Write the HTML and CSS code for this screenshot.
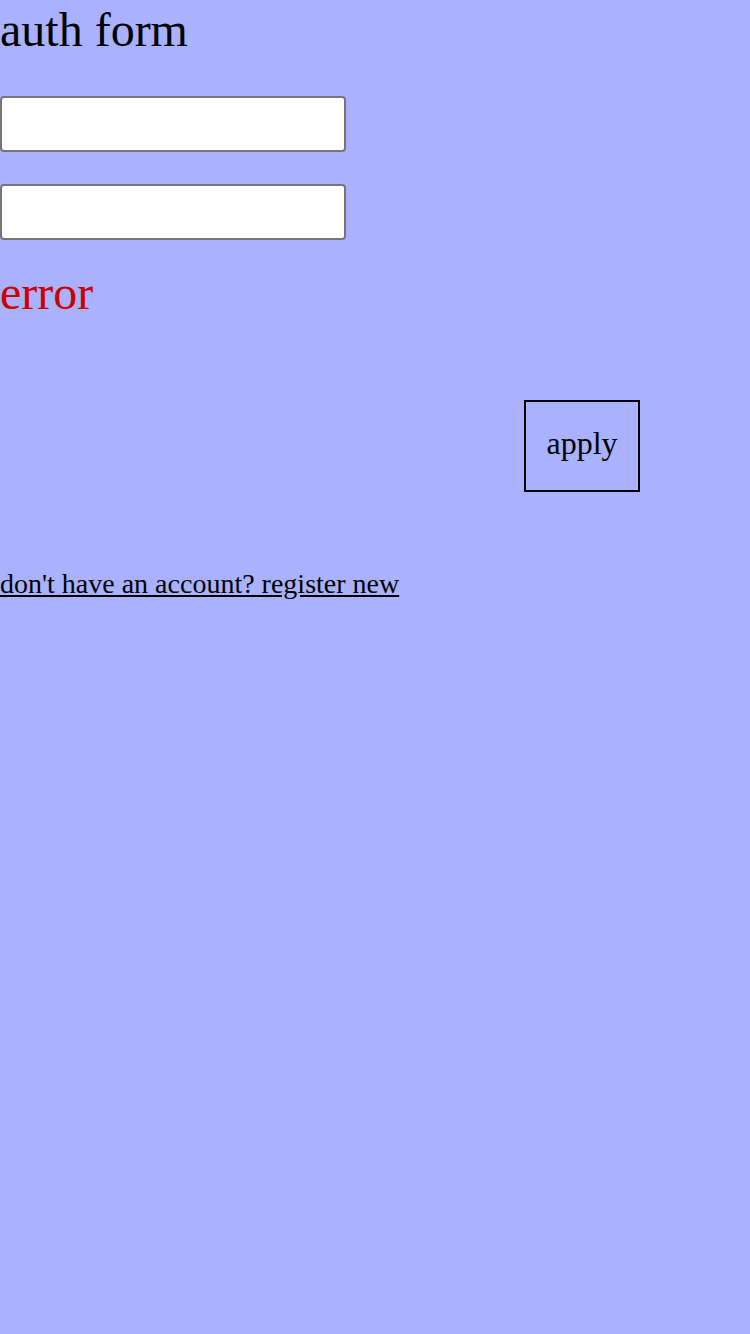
FILE: index.html
```html
<!DOCTYPE html>
<html>
<head>
<meta charset="utf-8">
<link rel="stylesheet" href="styles.css">
</head>
<body>
<div class="page">
  <h1 class="title">auth form</h1>
  <div class="fields">
    <input class="field" type="text">
    <input class="field" type="password">
  </div>
  <div class="error">error</div>
  <div class="actions">
    <button class="apply">apply</button>
  </div>
  <a class="register" href="#">don't have an account? register new</a>
</div>
</body>
</html>
```

FILE: styles.css
```css
html, body {
  margin: 0;
  padding: 0;
  background: #aab2ff;
}
body {
  font-family: "Liberation Serif", "Times New Roman", serif;
  color: #000;
  min-height: 1334px;
}
.page {
  display: flex;
  flex-direction: column;
  align-items: flex-start;
}
.title {
  margin: 0;
  font-size: 48px;
  font-weight: normal;
  line-height: 60px;
}
.fields {
  margin-top: 36px;
  display: flex;
  flex-direction: column;
  gap: 32px;
}
.field {
  box-sizing: border-box;
  width: 346px;
  height: 56px;
  margin: 0;
  border: 2px solid #767676;
  border-radius: 4px;
  background: #fff;
  padding: 2px 4px;
  font-size: 26px;
}
.error {
  margin-top: 25px;
  color: #cc0000;
  font-size: 48px;
  line-height: 56px;
}
.actions {
  margin-top: 79px;
  align-self: stretch;
  display: flex;
  justify-content: flex-end;
  padding-right: 110px;
}
.apply {
  box-sizing: border-box;
  width: 116px;
  height: 92px;
  margin: 0;
  padding: 0 0 6px;
  border: 2px solid #000;
  background: transparent;
  font-family: "Liberation Serif", "Times New Roman", serif;
  font-size: 32px;
  color: #000;
}
.register {
  margin-top: 75px;
  font-size: 28px;
  line-height: 33px;
  color: #000;
  text-decoration: underline;
}
```
